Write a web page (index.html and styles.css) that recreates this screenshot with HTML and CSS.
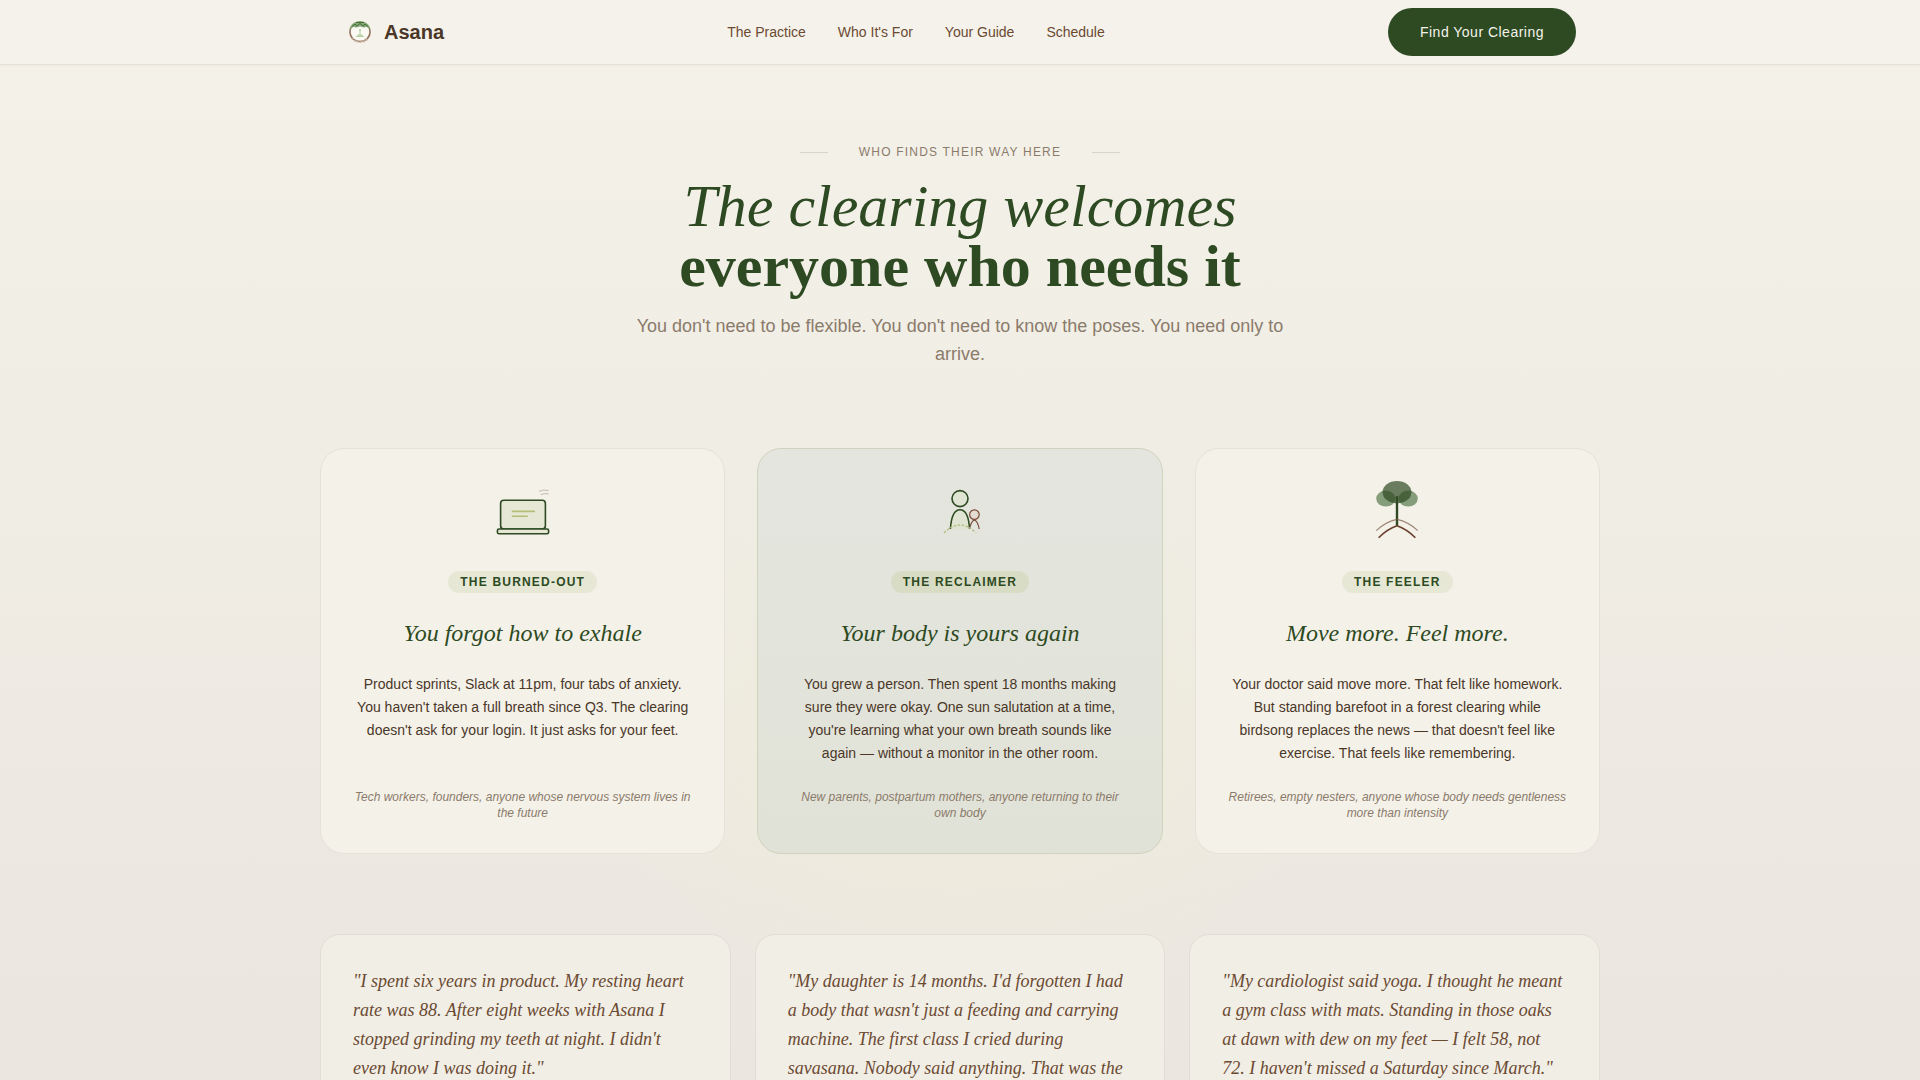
FILE: index.html
```html
<!DOCTYPE html>
<html lang="en">
<head>
    <meta charset="UTF-8">
    <meta name="viewport" content="width=device-width, initial-scale=1.0">
    <title>Asana</title>
    <link rel="stylesheet" href="styles.css">
</head>
<body>
    <header class="site-header">
        <nav class="nav">
            <a class="logo" href="#">
                <svg class="logo-mark" viewBox="0 0 32 32" fill="none" aria-hidden="true">
                    <ellipse cx="16" cy="16" rx="10" ry="9.500" fill="#fbf9f4" stroke="#8f705b" stroke-width="1.500"/>
                    <path d="M5.500 14C6 8.500 11 5 16 5s10 3.500 10.500 9c-2-2.500-3-3.500-5-3-2 1.500-3-.5-5.500-.5s-3.500 2-5.500.5c-2-.5-3 .5-5 3z" fill="#86a676"/>
                    <path d="M8 10.500l3-2.500 2 2 3-2.500 3 2.500 2-2 3 2.500M12 6.500h8" stroke="#47703c"/>
                    <circle cx="16" cy="14" r="1" fill="#a9c79a"/>
                    <path d="M16 15v3M12.500 20.500c2-2.500 5-2.500 7 0z" fill="#c5dab8" stroke="#b5d0a6"/>
                    <path d="M8 22c3 5 13 5 16 0" stroke="#c4ae9c" stroke-width="2" stroke-dasharray="2 1"/>
                </svg>
                <span>Asana</span>
            </a>
            <div class="nav-links">
                <a href="#practice">The Practice</a>
                <a href="#who">Who It's For</a>
                <a href="#guide">Your Guide</a>
                <a href="#schedule">Schedule</a>
            </div>
            <button class="nav-cta" type="button">Find Your Clearing</button>
        </nav>
    </header>

    <main class="who" id="who">
        <div class="intro">
            <p class="eyebrow">Who finds their way here</p>
            <h1 class="title"><em>The clearing welcomes</em><strong>everyone who needs it</strong></h1>
            <p class="subtitle">You don't need to be flexible. You don't need to know the poses. You need only to arrive.</p>
        </div>

        <div class="personas">
            <article class="persona">
                <svg class="persona-icon" viewBox="0 0 80 80" fill="none" aria-hidden="true">
                    <rect x="12" y="24" width="56" height="36" rx="4" fill="#e6e8d5" stroke="#2d4a22" stroke-width="2"/>
                    <rect x="8" y="60" width="64" height="6" rx="2" fill="#e6e8d5" stroke="#2d4a22" stroke-width="2"/>
                    <path d="M26 38h29M26 44h20" stroke="#b5be77" stroke-width="2"/>
                    <path d="M60 13q6-3 12-1M62 17q5-2 10-1" stroke="#8b7b6b" stroke-opacity=".6"/>
                </svg>
                <span class="tag">The Burned-Out</span>
                <h2 class="persona-title">You forgot how to exhale</h2>
                <p class="persona-text">Product sprints, Slack at 11pm, four tabs of anxiety. You haven't taken a full breath since Q3. The clearing doesn't ask for your login. It just asks for your feet.</p>
                <p class="persona-note">Tech workers, founders, anyone whose nervous system lives in the future</p>
            </article>

            <article class="persona persona-featured">
                <svg class="persona-icon" viewBox="0 0 80 80" fill="none" aria-hidden="true">
                    <circle cx="40" cy="22" r="10" fill="#e0e5d3" stroke="#2d4a22" stroke-width="2"/>
                    <path d="M28 60c1-15 5-24 12-24s11 9 12 24" fill="#e0e5d3" stroke="#2d4a22" stroke-width="2"/>
                    <circle cx="58" cy="42" r="6" fill="#e4dcd2" stroke="#7a4a36" stroke-width="1.500"/>
                    <path d="M52 60c1-7 4-11 6-11s5 4 6 11" stroke="#7a4a36" stroke-width="1.500"/>
                    <path d="M20 65q20-20 40 0" stroke="#b8c18a" stroke-width="2" stroke-dasharray="3 2"/>
                </svg>
                <span class="tag">The Reclaimer</span>
                <h2 class="persona-title">Your body is yours again</h2>
                <p class="persona-text">You grew a person. Then spent 18 months making sure they were okay. One sun salutation at a time, you're learning what your own breath sounds like again — without a monitor in the other room.</p>
                <p class="persona-note">New parents, postpartum mothers, anyone returning to their own body</p>
            </article>

            <article class="persona">
                <svg class="persona-icon" viewBox="0 0 80 80" fill="none" aria-hidden="true">
                    <ellipse cx="26" cy="22" rx="12" ry="10" fill="#4a7040" fill-opacity=".65"/>
                    <ellipse cx="54" cy="22" rx="12" ry="10" fill="#4a7040" fill-opacity=".65"/>
                    <ellipse cx="40" cy="14" rx="18" ry="14" fill="#2d4a22" fill-opacity=".7"/>
                    <path d="M40 19v37" stroke="#2d4a22" stroke-width="3"/>
                    <path d="M14 62q12-11 26-14 14 3 26 14" stroke="#7a5a46" stroke-opacity=".7" stroke-width="1.500"/>
                    <path d="M17 71q11-11 23-15 12 4 23 15" stroke="#6b4030" stroke-width="2"/>
                </svg>
                <span class="tag">The Feeler</span>
                <h2 class="persona-title">Move more. Feel more.</h2>
                <p class="persona-text">Your doctor said move more. That felt like homework. But standing barefoot in a forest clearing while birdsong replaces the news — that doesn't feel like exercise. That feels like remembering.</p>
                <p class="persona-note">Retirees, empty nesters, anyone whose body needs gentleness more than intensity</p>
            </article>
        </div>

        <div class="quotes">
            <blockquote class="quote">"I spent six years in product. My resting heart rate was 88. After eight weeks with Asana I stopped grinding my teeth at night. I didn't even know I was doing it."</blockquote>
            <blockquote class="quote">"My daughter is 14 months. I'd forgotten I had a body that wasn't just a feeding and carrying machine. The first class I cried during savasana. Nobody said anything. That was the</blockquote>
            <blockquote class="quote">"My cardiologist said yoga. I thought he meant a gym class with mats. Standing in those oaks at dawn with dew on my feet — I felt 58, not 72. I haven't missed a Saturday since March."</blockquote>
        </div>
    </main>
</body>
</html>
```

FILE: styles.css
```css
:root {
  --cream: #f5f2eb;
  --forest: #2d4a22;
  --bark: #6b4a32;
  --soil: #4a3728;
  --stone: #8b7b6b;
  --sans: "Liberation Sans", Arial, sans-serif;
  --serif: "Liberation Serif", "Times New Roman", serif;
}
* {
  box-sizing: border-box;
  margin: 0;
}
body {
  font-family: var(--sans);
  color: var(--soil);
  background-color: var(--cream);
}
a {
  color: inherit;
  text-decoration: none;
}

/* header */
.site-header {
  background-color: var(--cream);
  border-bottom: 1px solid #e4e0d8;
  box-shadow: 0 1px 3px rgba(74, 55, 40, 0.04);
  position: sticky;
  top: 0;
}
.nav {
  display: flex;
  align-items: center;
  justify-content: space-between;
  max-width: 1280px;
  margin: 0 auto;
  padding: 8px 24px;
}
.logo {
  display: flex;
  align-items: center;
  gap: 8px;
  font-size: 20px;
  font-weight: bold;
}
.logo-mark {
  width: 32px;
  height: 32px;
}
.nav-links {
  display: flex;
  gap: 32px;
  font-size: 14px;
  color: var(--bark);
}
.nav-cta {
  height: 48px;
  padding: 0 32px;
  border: none;
  border-radius: 24px;
  background-color: var(--forest);
  color: var(--cream);
  font-family: inherit;
  font-size: 14px;
  letter-spacing: 0.035em;
}

/* who it's for */
.who {
  padding: 80px 24px;
  background: radial-gradient(ellipse 400px 280px at 50% 660px, rgba(240, 240, 210, 0.45), transparent),
    linear-gradient(#f4f1e9, #efece4 480px, #ebe6df 1000px);
}
.intro {
  max-width: 672px;
  margin: 0 auto 80px;
  text-align: center;
}
.eyebrow {
  display: flex;
  align-items: center;
  justify-content: center;
  gap: 31px;
  margin-bottom: 16px;
  font-size: 12px;
  line-height: 15px;
  letter-spacing: 0.1em;
  text-transform: uppercase;
  color: var(--stone);
}
.eyebrow::before,
.eyebrow::after {
  content: "";
  width: 28px;
  height: 1px;
  background-color: #d9d4ca;
}
.title {
  margin-bottom: 16px;
  font-family: var(--serif);
  font-size: 60px;
  line-height: 60px;
  font-weight: normal;
  color: var(--forest);
}
.title em,
.title strong {
  display: block;
}
.subtitle {
  font-size: 18px;
  line-height: 28px;
  color: var(--stone);
}

.personas,
.quotes {
  display: grid;
  grid-template-columns: repeat(3, 1fr);
  max-width: 1280px;
  margin: 0 auto;
}
.personas {
  gap: 32px;
  margin-bottom: 80px;
}
.persona {
  display: flex;
  flex-direction: column;
  align-items: center;
  gap: 24px;
  padding: 32px;
  border: 1px solid #e6e2da;
  border-radius: 24px;
  background-color: #f4f1e9;
  text-align: center;
}
.persona-featured {
  border-color: #d0d4bc;
  background: linear-gradient(#e4e5de, #e1e2d7);
}
.persona-icon {
  width: 64px;
  height: 64px;
  margin-bottom: 2px;
}
.tag {
  padding: 4px 12px;
  border-radius: 12px;
  background-color: #e6e8d5;
  color: var(--forest);
  font-size: 12px;
  line-height: 14px;
  font-weight: bold;
  letter-spacing: 0.1em;
  text-transform: uppercase;
}
.persona-featured .tag {
  background-color: #d9dcc5;
}
.persona-title {
  font-family: var(--serif);
  font-size: 24px;
  line-height: 32px;
  font-style: italic;
  font-weight: normal;
  color: var(--forest);
}
.persona-text {
  flex: 1;
  font-size: 14px;
  line-height: 23px;
}
.persona-note {
  font-size: 12px;
  line-height: 16px;
  font-style: italic;
  color: var(--stone);
}

.quotes {
  gap: 24px;
}
.quote {
  padding: 32px;
  border: 1px solid #e2ded5;
  border-radius: 20px;
  background-color: #f1eee6;
  font-family: var(--serif);
  font-size: 18px;
  line-height: 29px;
  font-style: italic;
  color: var(--bark);
}

@media (max-width: 900px) {
  .personas,
  .quotes {
    grid-template-columns: 1fr;
  }
}
```
